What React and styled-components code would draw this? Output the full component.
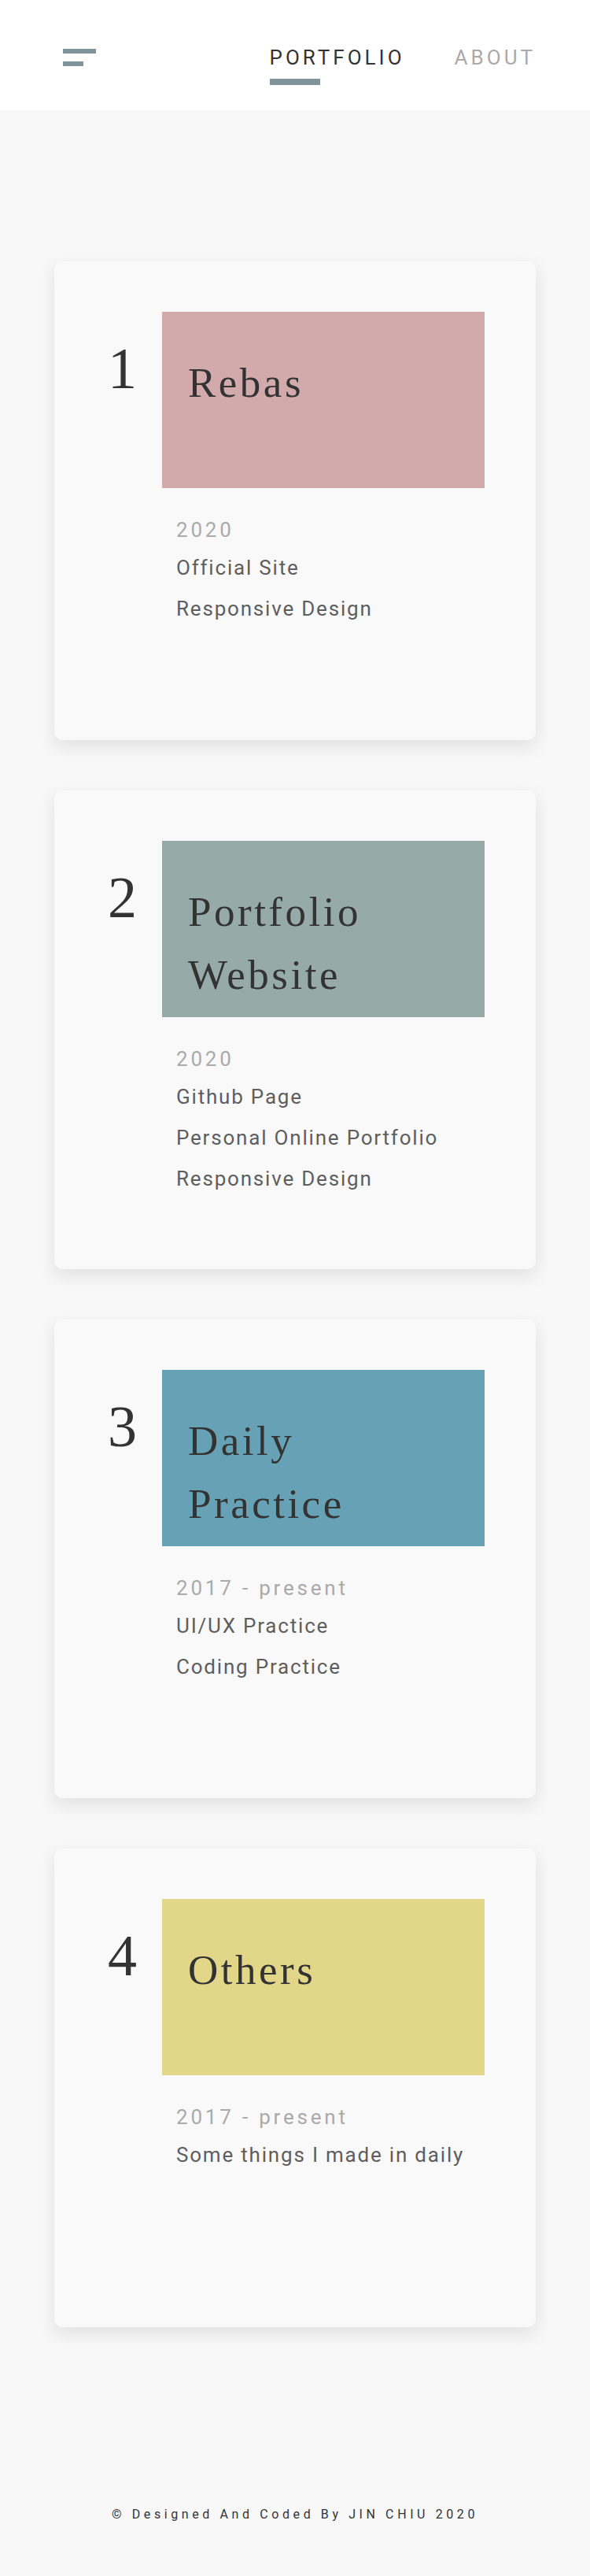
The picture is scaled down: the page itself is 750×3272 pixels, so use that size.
import React from "react";
import styled, { createGlobalStyle } from "styled-components";

const GlobalStyle = createGlobalStyle`
  html, body { margin: 0; padding: 0; }
  body {
    background: #f8f8f8;
    font-family: Roboto, "Liberation Sans", sans-serif;
    color: #333;
  }
  * { box-sizing: border-box; }
`;

const Page = styled.div`
  width: 750px;
  min-height: 3272px;
  display: flex;
  flex-direction: column;
`;

const Header = styled.header`
  height: 140px;
  background: #ffffff;
  display: flex;
  justify-content: space-between;
  align-items: flex-start;
  padding: 0 69px 0 80px;
`;

const MenuButton = styled.div`
  margin-top: 62px;
  display: flex;
  flex-direction: column;
  gap: 10px;
`;

const MenuBar = styled.span`
  display: block;
  width: ${(p) => p.$w}px;
  height: 6px;
  background: #80949c;
`;

const Nav = styled.nav`
  margin-top: 58px;
  display: flex;
  gap: 63px;
`;

const NavItem = styled.a`
  display: flex;
  flex-direction: column;
  align-items: flex-start;
  gap: 12px;
  text-decoration: none;
  font-family: Roboto, sans-serif;
  font-size: 26px;
  line-height: 30px;
  letter-spacing: 4px;
  color: ${(p) => (p.$active ? "#333333" : "#aaaaaa")};
`;

const NavUnderline = styled.span`
  display: block;
  width: 64px;
  height: 8px;
  background: ${(p) => (p.$active ? "#80949c" : "transparent")};
`;

const Main = styled.main`
  padding: 192px 69px 160px;
  display: flex;
  flex-direction: column;
  gap: 64px;
`;

const Card = styled.article`
  height: 608px;
  background: #f9f9f9;
  border-radius: 10px;
  box-shadow: 0 8px 24px rgba(0, 0, 0, 0.1);
  padding: 64px 65px 0 68px;
  display: grid;
  grid-template-columns: 69px 1fr;
  align-items: start;
`;

const Number = styled.div`
  padding-top: 32px;
  font-family: "Liberation Serif", "DejaVu Serif", serif;
  font-size: 74px;
  line-height: 80px;
  color: #333;
`;

const Content = styled.div`
  display: flex;
  flex-direction: column;
`;

const Cover = styled.div`
  height: 224px;
  background: ${(p) => p.$color};
  padding: 50px 100px 0 33px;
`;

const Title = styled.h2`
  margin: 0;
  font-family: "Liberation Serif", "DejaVu Serif", serif;
  font-weight: 400;
  font-size: 53px;
  line-height: 80px;
  letter-spacing: 3.5px;
  color: #333;
`;

const Info = styled.div`
  margin-top: 31px;
  padding-left: 18px;
  display: flex;
  flex-direction: column;
`;

const Year = styled.div`
  font-family: Roboto, sans-serif;
  font-size: 26px;
  line-height: 44px;
  letter-spacing: 3.8px;
  color: #aaaaaa;
`;

const Item = styled.div`
  font-family: Roboto, sans-serif;
  font-size: 26px;
  line-height: 52px;
  letter-spacing: 1.8px;
  color: #5e5e5e;
`;

const Footer = styled.footer`
  padding: 66px 0;
  text-align: center;
  font-family: Roboto, sans-serif;
  font-size: 16px;
  line-height: 24px;
  letter-spacing: 4.6px;
  color: #333;
`;

const projects = [
  {
    n: "1",
    title: "Rebas",
    color: "#d2aaab",
    year: "2020",
    items: ["Official Site", "Responsive Design"],
  },
  {
    n: "2",
    title: "Portfolio Website",
    color: "#96aaa8",
    year: "2020",
    items: ["Github Page", "Personal Online Portfolio", "Responsive Design"],
  },
  {
    n: "3",
    title: "Daily Practice",
    color: "#67a1b5",
    year: "2017 - present",
    items: ["UI/UX Practice", "Coding Practice"],
  },
  {
    n: "4",
    title: "Others",
    color: "#e2d789",
    year: "2017 - present",
    items: ["Some things I made in daily"],
  },
];

export default function App() {
  return (
    <Page>
      <GlobalStyle />
      <Header>
        <MenuButton aria-label="menu">
          <MenuBar $w={42} />
          <MenuBar $w={26} />
        </MenuButton>
        <Nav>
          <NavItem $active href="#">
            PORTFOLIO
            <NavUnderline $active />
          </NavItem>
          <NavItem href="#">
            ABOUT
            <NavUnderline />
          </NavItem>
        </Nav>
      </Header>
      <Main>
        {projects.map((p) => (
          <Card key={p.n}>
            <Number>{p.n}</Number>
            <Content>
              <Cover $color={p.color}>
                <Title>{p.title}</Title>
              </Cover>
              <Info>
                <Year>{p.year}</Year>
                {p.items.map((it) => (
                  <Item key={it}>{it}</Item>
                ))}
              </Info>
            </Content>
          </Card>
        ))}
      </Main>
      <Footer>© Designed And Coded By JIN CHIU 2020</Footer>
    </Page>
  );
}
